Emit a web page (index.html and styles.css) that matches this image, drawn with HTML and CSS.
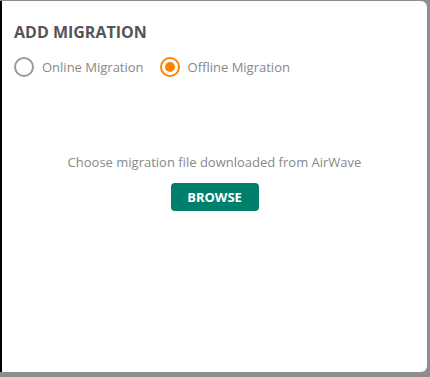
FILE: index.html
```html
<!DOCTYPE html>
<html lang="en">
<head>
  <meta charset="UTF-8" />
  <title>Add Migration</title>
  <link rel="stylesheet" href="styles.css">
</head>
<body>
  <div class="dialog">
    <h2 class="title">ADD MIGRATION</h2>

    <div class="radio-row">
      <label class="radio">
        <span class="circle"></span>
        Online Migration
      </label>
      <label class="radio checked">
        <span class="circle"></span>
        Offline Migration
      </label>
    </div>

    <div class="upload">
      <p>Choose migration file downloaded from AirWave</p>
      <button class="browse">BROWSE</button>
    </div>
  </div>
</body>
</html>
```

FILE: styles.css
```css
body {
  margin: 0;
  background-color: #8e8e8e;
  font-family: 'Open Sans', sans-serif;
  height: 377px;
  overflow: hidden;
}

.dialog {
  box-sizing: border-box;
  width: 427px;
  height: 371px;
  margin-top: 1px;
  background: #fff;
  border-left: 2px solid #000;
  border-radius: 0 6px 6px 0;
  padding: 20px 12px;
}

.title {
  margin: 0;
  font-size: 16px;
  font-weight: 700;
  color: #555;
  line-height: 22px;
}

.radio-row {
  display: flex;
  gap: 16px;
  margin-top: 14px;
}

.radio {
  display: flex;
  align-items: center;
  gap: 8px;
  font-size: 13px;
  color: #888;
}

.circle {
  box-sizing: border-box;
  width: 20px;
  height: 20px;
  border: 2px solid #999;
  border-radius: 50%;
  display: flex;
  align-items: center;
  justify-content: center;
}

.checked .circle {
  border-color: #ff8300;
}

.checked .circle::after {
  content: '';
  width: 10px;
  height: 10px;
  border-radius: 50%;
  background: #ff8300;
}

.upload {
  margin-top: 76px;
  text-align: center;
}

.upload p {
  margin: 0;
  font-size: 13px;
  color: #888;
}

.browse {
  margin-top: 12px;
  width: 88px;
  height: 28px;
  border: none;
  border-radius: 4px;
  background: #00806c;
  color: #fff;
  font-family: 'Open Sans', sans-serif;
  font-weight: 700;
  font-size: 13px;
}
```
